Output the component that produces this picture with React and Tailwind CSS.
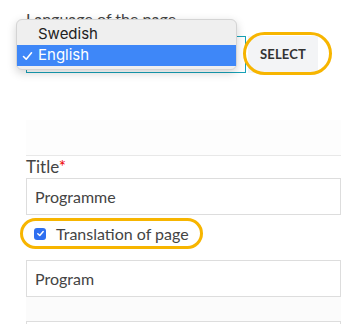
import React from "react";

export default function App() {
  return (
    <div className="relative w-[341px] h-[324px] overflow-hidden bg-white text-[#333]" style={{ fontFamily: 'Lato, "Noto Sans", sans-serif' }}>
      <div className="pl-[26px] pt-[8px]">
        <div className="text-[16px] leading-[22px] text-[#444] whitespace-nowrap">Language of the page</div>
        <div className="flex items-center mt-[6px] h-[37px]">
          <div className="w-[220px] h-[37px] border border-[#17a2b8] bg-white"></div>
          <div className="relative ml-[2px]">
            <div className="h-[37px] w-[70px] bg-[#f3f4f6] flex items-center justify-center text-[13px] font-bold text-[#333] tracking-[0.2px]">SELECT</div>
            <div className="absolute left-[-5px] top-[-4px] w-[89px] h-[43px] rounded-full border-[3px] border-[#f7b500]"></div>
          </div>
        </div>
        <div className="mt-[47px] h-[36px] bg-[#fdfdfd] border-b border-[#e8e8e8]"></div>
        <div className="text-[17px] leading-[22px] text-[#444]">
          Title<span className="text-[#e00]">*</span>
        </div>
        <div className="h-[37px] border border-[#ddd] flex items-center pl-[8px] text-[16px] text-[#444]">Programme</div>
        <div className="ml-[-6px] mt-[3px] w-[183px] h-[31px] rounded-full border-[3px] border-[#f7b500] flex items-center pl-[11px]">
          <span className="w-[12px] h-[12px] rounded-[3px] bg-[#2f6ff0] flex items-center justify-center shrink-0">
            <svg width="9" height="9" viewBox="0 0 10 10"><path d="M2 5.2 L4.2 7.3 L8 2.8" fill="none" stroke="white" strokeWidth="1.6" strokeLinecap="round" strokeLinejoin="round"/></svg>
          </span>
          <span className="ml-[10px] text-[16px] text-[#444] whitespace-nowrap">Translation of page</span>
        </div>
        <div className="mt-[11px] h-[37px] border border-[#ddd] flex items-center pl-[8px] text-[16px] text-[#444]">Program</div>
        <div className="h-[24px] bg-[#fbfbfb]"></div>
        <div className="h-[20px] border border-[#ddd]"></div>
      </div>

      <div className="absolute left-[16px] top-[19px] w-[221px] h-[51px] rounded-[6px] bg-[#efefef] border border-[#d4d4d4] shadow-[0_3px_10px_rgba(0,0,0,0.18)] pt-[3px]" style={{ fontFamily: 'Inter, "Noto Sans", sans-serif' }}>
        <div className="h-[22px] flex items-center pl-[21px] text-[15px] text-[#222]">Swedish</div>
        <div className="h-[21px] bg-[#3e87f8] flex items-center text-[15px] text-white">
          <span className="w-[21px] flex justify-center">
            <svg width="11" height="10" viewBox="0 0 11 10"><path d="M1.5 5.5 L4.2 8.2 L9.5 1.8" fill="none" stroke="white" strokeWidth="1.6" strokeLinecap="round" strokeLinejoin="round"/></svg>
          </span>
          English
        </div>
      </div>
    </div>
  );
}
